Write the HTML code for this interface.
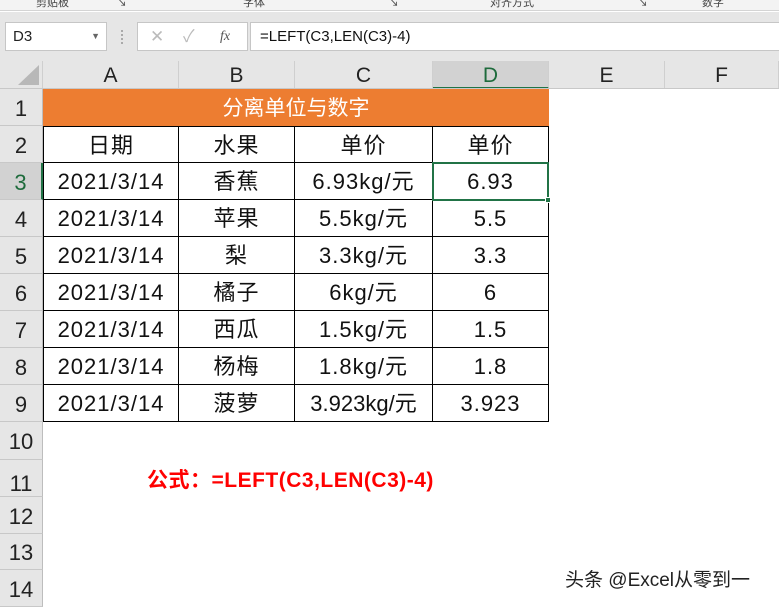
<!DOCTYPE html>
<html><head><meta charset="utf-8"><style>
*{margin:0;padding:0;box-sizing:border-box}
body{width:779px;height:609px;overflow:hidden;background:#fff;position:relative;font-family:"Liberation Sans","Noto Sans CJK SC",sans-serif}
.a{position:absolute}
.rib{left:0;top:0;width:779px;height:11px;background:#f3f3f3;border-bottom:1px solid #d4d4d4;font-size:11px;color:#444;overflow:hidden}
.rib span{position:absolute;top:-6px}
.bar{left:0;top:12px;width:779px;height:49px;background:#e6e6e6}
.box{background:#fff;border:1px solid #c6c6c6}
.ch{top:61px;height:28px;background:#e6e6e6;border-right:1px solid #cfcfcf;font-size:21px;text-align:center;line-height:30px;color:#222}
.rh{left:0;width:43px;background:#e6e6e6;border-bottom:1px solid #c8c8c8;border-right:1px solid #bdbdbd;font-size:22px;text-align:center;color:#222}
.c{border-right:1px solid #000;border-bottom:1px solid #000;font-size:22px;text-align:center;line-height:37px;color:#111;font-family:"Liberation Sans","Noto Sans CJK SC",sans-serif;letter-spacing:1px;white-space:nowrap}
</style></head><body>
<div class="a rib"><span style="left:36px">剪贴板</span><span style="left:116px">↘</span><span style="left:243px">字体</span><span style="left:388px">↘</span><span style="left:490px">对齐方式</span><span style="left:637px">↘</span><span style="left:702px">数字</span></div>
<div class="a bar"></div>
<div class="a box" style="left:5px;top:22px;width:102px;height:29px;font-size:15px;line-height:27px;padding-left:7px;color:#222">D3<span style="position:absolute;right:6px;top:0;font-size:9px;color:#666">▼</span></div>
<div class="a" style="left:121px;top:30px;width:2px;height:14px;border-left:2px dotted #aaa"></div>
<div class="a box" style="left:137px;top:22px;width:111px;height:29px;font-size:17px;line-height:27px;color:#bbb"><span style="position:absolute;left:12px">✕</span><span style="position:absolute;left:45px">✓</span><span style="position:absolute;left:82px;color:#555;font-family:'Liberation Serif';font-style:italic;font-size:14px">fx</span></div>
<div class="a box" style="left:250px;top:22px;width:540px;height:29px;font-size:15px;line-height:27px;padding-left:9px;color:#111">=LEFT(C3,LEN(C3)-4)</div>
<div class="a" style="left:0;top:61px;width:43px;height:28px;background:#e6e6e6;border-right:1px solid #cfcfcf"></div>
<div class="a" style="left:18px;top:65px;width:0;height:0;border-left:21px solid transparent;border-bottom:20px solid #b8b8b8"></div>
<div class="a ch" style="left:43px;width:136px">A</div>
<div class="a ch" style="left:179px;width:116px">B</div>
<div class="a ch" style="left:295px;width:138px">C</div>
<div class="a ch" style="left:433px;width:116px;background:#d2d2d2;color:#1e6b3c;border-bottom:2px solid #217346">D</div>
<div class="a ch" style="left:549px;width:116px">E</div>
<div class="a ch" style="left:665px;width:114px">F</div>
<div class="a" style="left:0;top:88px;width:779px;height:1px;background:#c8c8c8"></div>
<div id="rows"></div>
<div class="a" style="left:43px;top:89px;width:506px;height:37px;background:#ed7d31;color:#fff;font-size:21px;text-align:center;line-height:37px;font-family:'Noto Sans CJK SC',sans-serif">分离单位与数字</div>
<div id="tbl"></div>
<div class="a" style="left:147px;top:464px;color:#f00;font-weight:bold;font-size:21px;letter-spacing:0.5px;font-family:'Liberation Sans','Noto Sans CJK SC',sans-serif">公式：=LEFT(C3,LEN(C3)-4)</div>
<div class="a" style="left:565px;top:565px;color:#222;font-size:19px;text-shadow:0 0 2px #fff">头条 @Excel从零到一</div>
<script>
var tops=[89,126,163,200,237,274,311,348,385,422,460,497,534,570,607];
var h='';
for(var i=0;i<14;i++){var t=tops[i],hh=tops[i+1]-t;h+='<div class="a rh" style="top:'+t+'px;height:'+hh+'px;line-height:'+(i==10?hh+10:hh+2)+'px;'+(i==2?'background:#d2d2d2;color:#1e6b3c;border-right:2px solid #217346':'')+'">'+(i+1)+'</div>';}
document.getElementById('rows').innerHTML=h;
var d=[['日期','水果','单价','单价'],['2021/3/14','香蕉','6.93kg/元','6.93'],['2021/3/14','苹果','5.5kg/元','5.5'],['2021/3/14','梨','3.3kg/元','3.3'],['2021/3/14','橘子','6kg/元','6'],['2021/3/14','西瓜','1.5kg/元','1.5'],['2021/3/14','杨梅','1.8kg/元','1.8'],['2021/3/14','菠萝','3.923kg/元','3.923']];
var xs=[43,179,295,433,549];var s='';
for(var r=0;r<8;r++)for(var c=0;c<4;c++){s+='<div class="a c" style="left:'+xs[c]+'px;top:'+tops[r+1]+'px;width:'+(xs[c+1]-xs[c])+'px;height:37px;'+(c==0?'border-left:1px solid #000;':'')+(r==0?'border-top:1px solid #000;':'')+(c==2&&r==7?'letter-spacing:0;':'')+'">'+d[r][c]+'</div>';}
s+='<div class="a" style="left:432px;top:162px;width:117px;height:39px;border:2px solid #217346"></div><div class="a" style="left:545px;top:197px;width:6px;height:6px;background:#217346;border:1px solid #fff"></div>';
document.getElementById('tbl').innerHTML=s;
</script>
</body></html>
